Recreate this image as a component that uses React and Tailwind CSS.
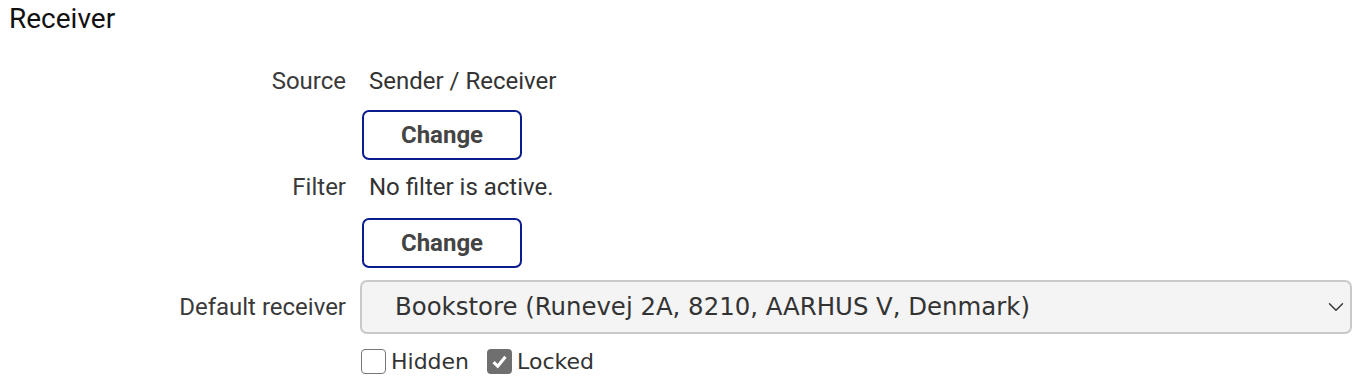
import { ChevronDown } from "lucide-react";

const roboto = { fontFamily: "Roboto, 'Liberation Sans', sans-serif" };
const dejavu = { fontFamily: "'DejaVu Sans', Verdana, sans-serif" };

function Row({ label, children, className = "" }) {
  return (
    <div className={`grid h-[32px] grid-cols-[346px_1fr] items-center gap-x-[14px] ${className}`}>
      <div className="text-right text-[24px] leading-[32px] text-[#3a3a3a]">{label}</div>
      <div>{children}</div>
    </div>
  );
}

function ChangeButton({ className = "" }) {
  return (
    <div className={`grid grid-cols-[346px_1fr] gap-x-[16px] ${className}`}>
      <div />
      <button className="h-[50px] w-[160px] rounded-[7px] border-2 border-[#0b1c8f] bg-white text-[24px] font-bold text-[#444]">
        Change
      </button>
    </div>
  );
}

function Box({ checked, label }) {
  return (
    <label className="flex items-center gap-[5px]">
      {checked ? (
        <span className="flex h-[25px] w-[25px] items-center justify-center rounded-[4px] bg-[#6f6f6f]">
          <svg viewBox="0 0 16 16" className="h-[19px] w-[19px]">
            <path d="M3 8.5 6.5 12 13 4" fill="none" stroke="white" strokeWidth="2.6" />
          </svg>
        </span>
      ) : (
        <span className="h-[25px] w-[25px] rounded-[4px] border-[1.5px] border-[#767676] bg-white" />
      )}
      <span className="leading-[25px]">{label}</span>
    </label>
  );
}

export default function App() {
  return (
    <div className="h-[382px] w-[1358px] overflow-hidden bg-white text-[#333]" style={roboto}>
      <h2 className="h-[34px] pl-[9px] pt-[4px] text-[28px] leading-[30px] text-[#111]">Receiver</h2>

      <div className="mt-[31px] pr-[6px]">
        <Row label="Source">
          <span className="pl-[9px] text-[24px] leading-[32px]">Sender / Receiver</span>
        </Row>
        <ChangeButton className="mt-[13px]" />
        <Row label="Filter" className="mt-[11px]">
          <span className="pl-[9px] text-[24px] leading-[32px]">No filter is active.</span>
        </Row>
        <ChangeButton className="mt-[15px]" />

        <Row label="Default receiver" className="mt-[12px] !h-[54px]">
          <div
            className="relative flex h-[54px] items-center rounded-[7px] border-2 border-[#c9c9c9] bg-[#f4f4f4] pl-[33px] text-[24.4px] text-[#333]"
            style={dejavu}
          >
            Bookstore (Runevej 2A, 8210, AARHUS V, Denmark)
            <ChevronDown className="absolute right-[1px] h-[26px] w-[26px] text-[#333]" strokeWidth={1.3} />
          </div>
        </Row>

        <div className="mt-[15px] grid grid-cols-[346px_1fr] gap-x-[15px]">
          <div />
          <div className="flex h-[25px] items-center gap-[18px] text-[22px] text-[#333]" style={dejavu}>
            <Box label="Hidden" />
            <Box checked label="Locked" />
          </div>
        </div>
      </div>
    </div>
  );
}
